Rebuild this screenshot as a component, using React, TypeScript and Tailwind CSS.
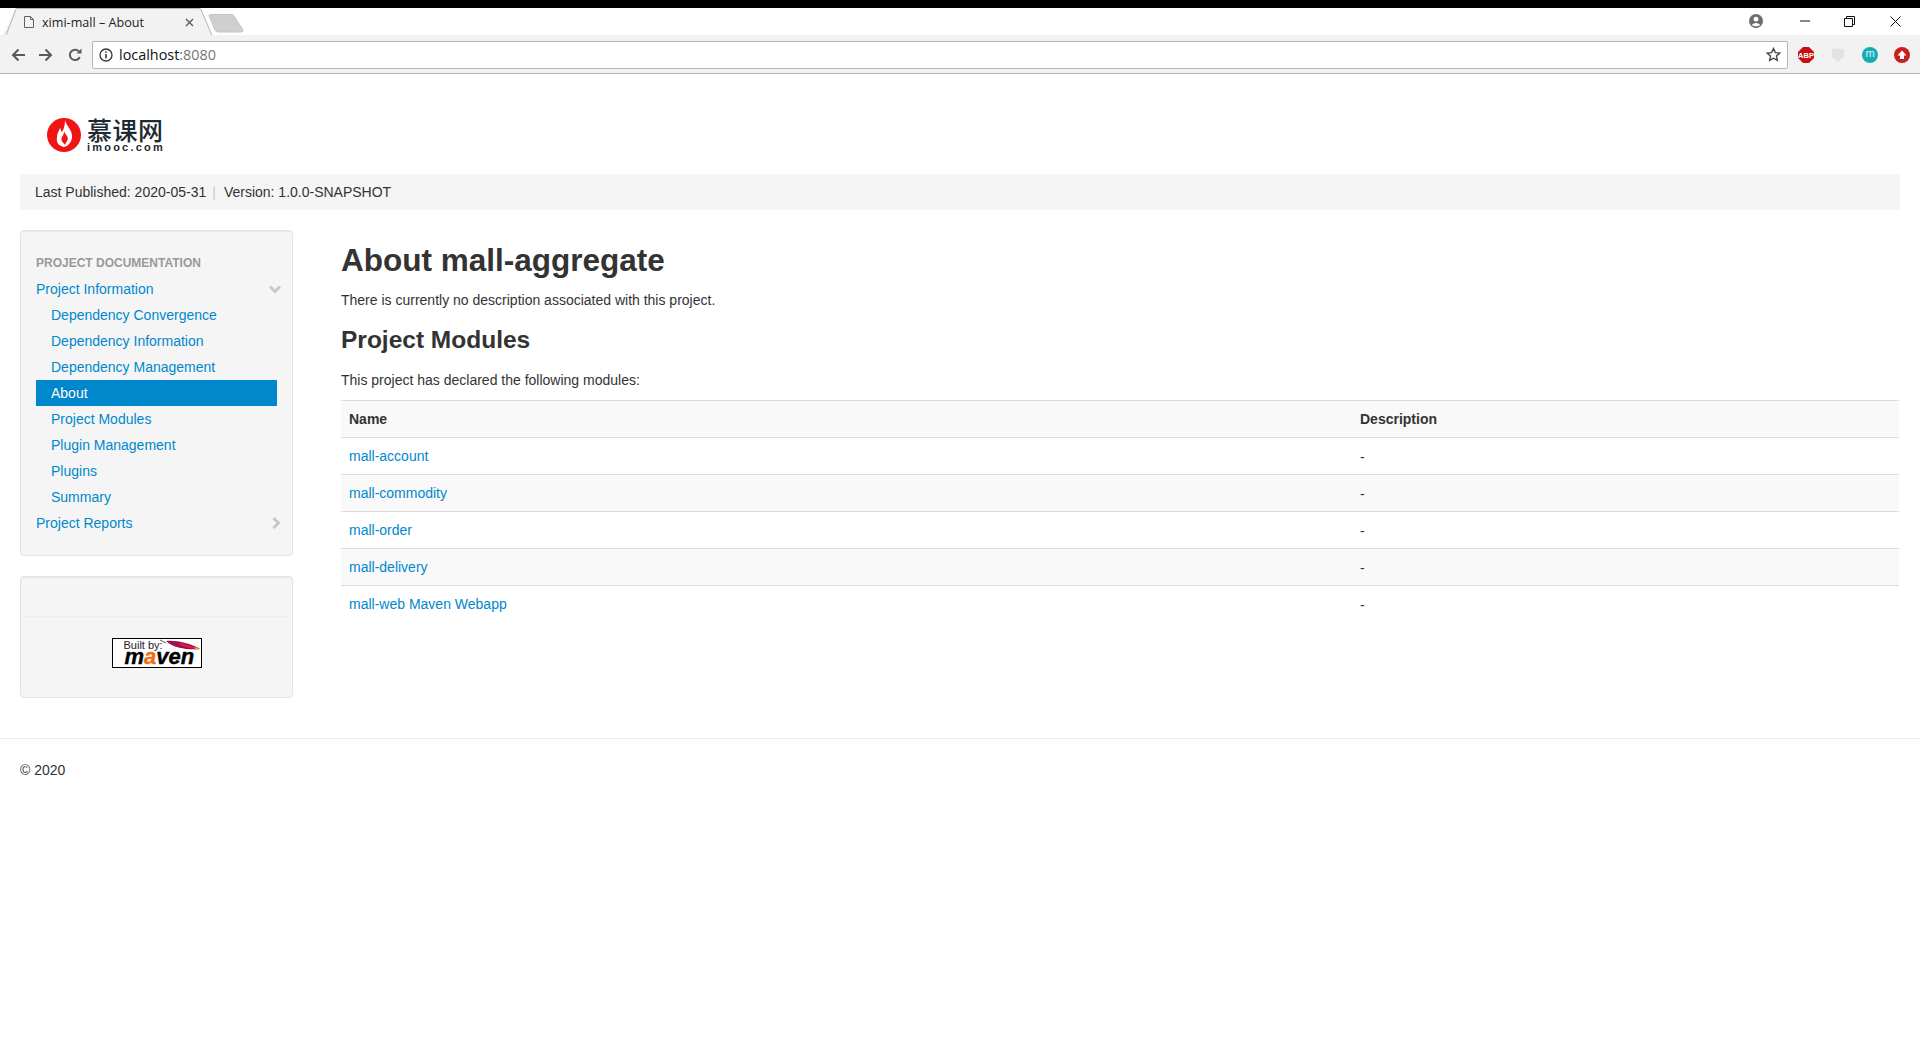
const subItems = ["Dependency Convergence", "Dependency Information", "Dependency Management", "About", "Project Modules", "Plugin Management", "Plugins", "Summary"];
const modules = ["mall-account", "mall-commodity", "mall-order", "mall-delivery", "mall-web Maven Webapp"];

const BrowserTabs = () => (
  <div className="h-[28px] bg-white flex items-end relative" style={{ fontFamily: '"Open Sans", sans-serif' }}>
    <div className="relative w-[212px] h-[28px] ml-[2px] flex items-center">
      <svg className="absolute inset-0" width="212" height="28" viewBox="0 0 212 28">
        <path d="M0 28 L14 1 Q14.500 0 16 0 L196 0 Q198 0 199 1 L211 28 Z" fill="#f2f2f2" />
        <path d="M0 27.500 L4 27.500 L14 1 Q14.500 0.500 16 0.500 L196 0.500 Q198 0.500 199 1.500 L210 27.500 L212 27.500" fill="none" stroke="#b5b5b5" />
      </svg>
      <svg className="relative ml-[21px]" width="12" height="14" viewBox="0 0 12 14" fill="none" stroke="#5f6368">
        <path d="M1.500 1.500 H7.500 L10.500 4.500 V12.500 H1.500 Z M7.500 1.500 V4.500 H10.500" />
      </svg>
      <span className="relative ml-[7px] pt-px text-[12.600px] text-[#222] whitespace-nowrap">ximi-mall – About</span>
      <svg className="absolute left-[183px] top-[10px]" width="9" height="9" viewBox="0 0 9 9" stroke="#5a5a5a" strokeWidth="1.400">
        <path d="M1 1 L8 8 M8 1 L1 8" />
      </svg>
    </div>
    <svg className="mb-[3px] -ml-[6px]" width="36" height="19" viewBox="0 0 36 19">
      <path d="M1 1.500 Q1 0.500 3 0.500 L24 0.500 Q25 0.500 26 2 L35 16 Q35.500 18 33 18 L10 18 Q8 18 7 16 Z" fill="#cfcfcf" stroke="#c4c4c4" />
    </svg>
    <div className="ml-auto flex items-center h-[28px] pb-[2px]">
      <svg className="mr-[37px]" width="14" height="14" viewBox="0 0 14 14">
        <circle cx="7" cy="7" r="7" fill="#6e6e6e" />
        <circle cx="7" cy="5.200" r="2.400" fill="#fff" />
        <path d="M2.500 11 Q7 6.800 11.500 11 Q7 13.500 2.500 11" fill="#fff" />
      </svg>
      <svg className="mr-[34px]" width="10" height="2" viewBox="0 0 10 2"><path d="M0 1 H10" stroke="#111" /></svg>
      <svg className="mr-[35px]" width="11" height="11" viewBox="0 0 11 11" fill="none" stroke="#111">
        <path d="M0.500 2.500 H8.500 V10.500 H0.500 Z M2.500 2.500 V0.500 H10.500 V8.500 H8.500" />
      </svg>
      <svg className="mr-[19px]" width="11" height="11" viewBox="0 0 11 11" stroke="#111">
        <path d="M0.500 0.500 L10.500 10.500 M10.500 0.500 L0.500 10.500" />
      </svg>
    </div>
  </div>
);

const BrowserToolbar = () => (
  <div className="h-[39px] pt-px bg-[#f2f2f2] border-b border-[#b5b5b5] flex items-center -mt-px relative">
    <svg className="ml-[11px]" width="14" height="14" viewBox="0 0 14 14" fill="none" stroke="#5a5a5a" strokeWidth="2">
      <path d="M14 7 H2 M7.500 1.500 L2 7 L7.500 12.500" />
    </svg>
    <svg className="ml-[14px]" width="14" height="14" viewBox="0 0 14 14" fill="none" stroke="#5a5a5a" strokeWidth="2">
      <path d="M0 7 H12 M6.500 1.500 L12 7 L6.500 12.500" />
    </svg>
    <svg className="ml-[15px]" width="14" height="14" viewBox="0 0 14 14" fill="none" stroke="#5a5a5a" strokeWidth="2">
      <path d="M11.800 9 A5.200 5.200 0 1 1 10.800 3.200" />
      <path d="M8.500 5.500 H13.500 V0.500 Z" fill="#5a5a5a" stroke="none" />
    </svg>
    <div className="ml-[10px] w-[1696px] h-[28px] bg-white border border-[#b5b5b5] rounded-[2px] flex items-center">
      <svg className="ml-[6px]" width="14" height="14" viewBox="0 0 14 14" fill="none" stroke="#333" strokeWidth="1.300">
        <circle cx="7" cy="7" r="6" />
        <path d="M7 6 V10.500 M7 3.300 V4.700" strokeWidth="1.500" />
      </svg>
      <span className="ml-[6px] text-[14.400px] text-[#111]" style={{ fontFamily: '"Open Sans", sans-serif' }}>
        localhost<span className="text-[#777]">:8080</span>
      </span>
      <svg className="ml-auto mr-[6px]" width="15" height="15" viewBox="0 0 24 24" fill="none" stroke="#444" strokeWidth="2.200">
        <path d="M12 2.500 L15 9 L22 9.800 L16.800 14.500 L18.200 21.500 L12 18 L5.800 21.500 L7.200 14.500 L2 9.800 L9 9 Z" />
      </svg>
    </div>
    <svg className="ml-[10px]" width="16" height="16" viewBox="0 0 16 16">
      <path d="M5 0 H11 L16 5 V11 L11 16 H5 L0 11 V5 Z" fill="#c80f0f" />
      <text x="8" y="11" textAnchor="middle" fontSize="7.500" fontWeight="700" fill="#fff" fontFamily="Liberation Sans">ABP</text>
    </svg>
    <svg className="ml-[17px]" width="14" height="16" viewBox="0 0 14 16" fill="#e2e2e2">
      <path d="M1 1 L4 2.500 L7 1 L10 2.500 L13 1 V10 L7 15 L1 10 Z" />
    </svg>
    <div className="ml-[17px] w-[16px] h-[16px] rounded-full bg-[#14adb5] text-[#d9f5f5] text-[11px] leading-none flex items-center justify-center pb-[2px]" style={{ fontFamily: '"Liberation Sans", sans-serif' }}>m</div>
    <div className="ml-[16px] w-[16px] h-[16px] rounded-full bg-[#c9201f] flex items-center justify-center">
      <svg width="10" height="10" viewBox="0 0 10 10" fill="#fff"><path d="M5 0.500 L9.500 5.500 H7 V9 H3 V5.500 H0.500 Z" /></svg>
    </div>
  </div>
);

const Logo = () => (
  <div className="flex items-center ml-[27px] h-[34px]">
    <svg width="34" height="34" viewBox="0 0 34 34">
      <circle cx="17" cy="17" r="17" fill="#f01414" />
      <path d="M18 2 C19 8 26 12 25 20 C24 25 21 28 17 29 C12 28 9 25 10 19 C10 15 12 13 13 10 C14 12 14 13 15 14 C17 11 18 7 18 2 Z" fill="#fff" />
      <path d="M17 13 C18 17 22 18 20.500 22 C20 24 18.500 24.500 18 27 C16.500 24.500 13 23 15 19 C16 17 17 16 17 13 Z" fill="#f01414" />
    </svg>
    <div className="ml-[6px] w-[76px] text-[#1d2a33]">
      <div className="text-[25px] leading-[22px] tracking-[0.500px] font-medium whitespace-nowrap" style={{ fontFamily: '"Noto Sans CJK SC", sans-serif' }}>慕课网</div>
      <div className="mt-[3px] text-[11px] leading-[9px] font-bold tracking-[2.200px] whitespace-nowrap" style={{ fontFamily: '"Liberation Sans", sans-serif' }}>imooc.com</div>
    </div>
  </div>
);

const MavenBadge = () => (
  <div className="mx-auto w-[90px] h-[30px] border border-black bg-white relative">
    <span className="absolute left-[11px] top-px text-[11px] leading-[11px] text-[#222]">Built by:</span>
    <svg className="absolute left-[47px] top-0" width="42" height="14" viewBox="0 0 42 14">
      <path d="M0 1 L6 4" stroke="#333" strokeWidth="0.800" />
      <path d="M6 2 C16 1 30 4 40 10 C30 11 14 10 6 2 Z" fill="#a01050" />
      <path d="M18 4 C26 5 34 8 40 10 C32 10 24 8 18 4 Z" fill="#e0203c" />
      <path d="M35 8 L40 10 L35 11 Z" fill="#e0b030" />
    </svg>
    <span className="absolute left-[12px] top-[12px] text-[22px] leading-[12px] font-bold italic text-black [-webkit-text-stroke-width:0.4px]">
      m<span className="text-[#f07010]">a</span>ven
    </span>
  </div>
);

export default function App() {
  return (
    <div className="min-h-[1048px] bg-white text-[14px] leading-[20px] text-[#333]" style={{ fontFamily: '"Liberation Sans", Arial, sans-serif' }}>
      <div className="h-[8px] bg-black" />
      <BrowserTabs />
      <BrowserToolbar />

      <div className="px-[20px]">
        <div className="pt-[44px] pb-[22px]">
          <Logo />
        </div>
        <div className="h-[36px] bg-[#f5f5f5] rounded-[4px] flex items-center pl-[15px]">
          <span>Last Published: 2020-05-31</span>
          <span className="ml-[6px] text-[#ccc]">|</span>
          <span className="ml-[8px]">Version: 1.0.0-SNAPSHOT</span>
        </div>

        <div className="flex mt-[20px]">
          <div className="w-[273px] shrink-0">
            <div className="bg-[#f5f5f5] border border-[#e3e3e3] rounded-[4px] pt-[19px] pb-[19px] pl-[15px] pr-[15px] h-[326px] shadow-[inset_0_1px_1px_rgba(0,0,0,0.05)]">
              <div className="h-[26px] text-[12px] font-bold leading-[26px] text-[#999] uppercase">Project Documentation</div>
              <div className="h-[26px] flex items-center justify-between text-[#0088cc] -mr-[4px]">
                <span>Project Information</span>
                <svg width="12" height="9" viewBox="0 0 12 9" fill="none" stroke="#c8c8c8" strokeWidth="3">
                  <path d="M1 1.500 L6 6.500 L11 1.500" />
                </svg>
              </div>
              {subItems.map((item) =>
                item === "About" ? (
                  <div key={item} className="h-[26px] w-[241px] bg-[#0088cc] text-white font-normal pl-[15px] leading-[26px] [text-shadow:0_-1px_0_rgba(0,0,0,0.2)]">
                    {item}
                  </div>
                ) : (
                  <div key={item} className="h-[26px] pl-[15px] leading-[26px] text-[#0088cc]">
                    {item}
                  </div>
                )
              )}
              <div className="h-[26px] flex items-center justify-between text-[#0088cc] -mr-[4px]">
                <span>Project Reports</span>
                <svg width="9" height="12" viewBox="0 0 9 12" fill="none" stroke="#c8c8c8" strokeWidth="3">
                  <path d="M1.500 1 L6.500 6 L1.500 11" />
                </svg>
              </div>
            </div>

            <div className="mt-[20px] h-[122px] bg-[#f5f5f5] border border-[#e3e3e3] rounded-[4px] shadow-[inset_0_1px_1px_rgba(0,0,0,0.05)] pt-[39px]">
              <div className="border-t border-[#eeeeee] pt-[21px]">
                <MavenBadge />
              </div>
            </div>
          </div>

          <div className="flex-1 ml-[48px] mr-px">
            <h1 className="text-[31.500px] font-bold leading-[40px] text-[#333] mt-[10px]">About mall-aggregate</h1>
            <p className="mt-[10px] mb-[10px]">There is currently no description associated with this project.</p>
            <h2 className="text-[24.500px] font-bold leading-[40px] text-[#333]">Project Modules</h2>
            <p className="mt-[10px] mb-[10px]">This project has declared the following modules:</p>
            <table className="w-full border-collapse">
              <thead>
                <tr className="bg-[#f9f9f9] border-t border-[#dddddd]">
                  <th className="h-[37px] px-[8px] text-left font-bold w-[1011px]">Name</th>
                  <th className="h-[37px] px-[8px] text-left font-bold">Description</th>
                </tr>
              </thead>
              <tbody>
                {modules.map((name, index) => (
                  <tr key={name} className={`border-t border-[#dddddd] ${index % 2 === 1 ? "bg-[#f9f9f9]" : "bg-white"}`}>
                    <td className="h-[37px] px-[8px] text-[#0088cc]">{name}</td>
                    <td className="h-[37px] px-[8px] pt-[2px]">-</td>
                  </tr>
                ))}
              </tbody>
            </table>
          </div>
        </div>
      </div>

      <div className="mt-[40px] border-t border-[#eeeeee] px-[20px] pt-[21px]">© 2020</div>
    </div>
  );
}
